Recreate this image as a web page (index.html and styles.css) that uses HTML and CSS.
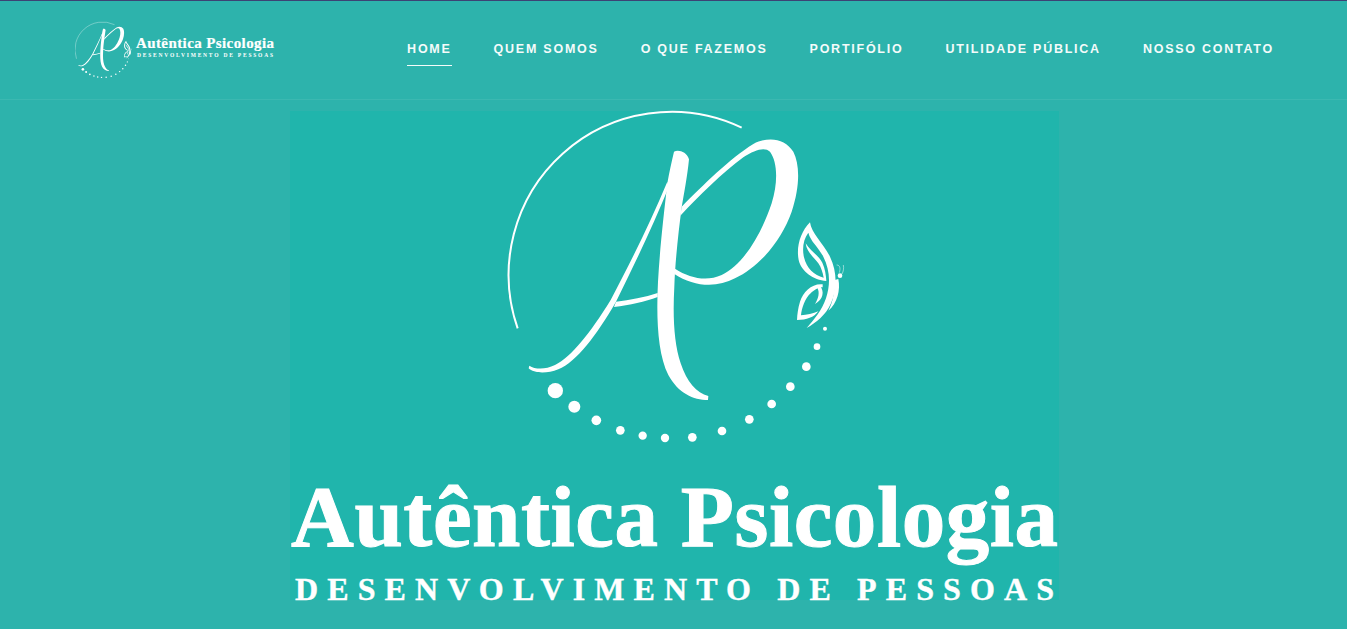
FILE: index.html
```html
<!DOCTYPE html>
<html>
<head>
    <title>Autêntica Psicologia</title>
    <link rel="stylesheet" href="styles.css">
</head>
<body>
    <svg class="defs" width="0" height="0">
        <defs>
            <!-- AP mark, drawn in a 1110x1050 box -->
            <g id="mark">
                <path class="arc" d="M755 83 A489 489 0 0 0 83 685"/>
                <!-- A: thin stroke -->
                <path d="M118 797 C135 808 165 810 195 795 C245 770 300 700 362 600 C420 490 480 370 532 245 L536 262 C490 375 435 490 378 605 C320 705 260 785 205 808 C170 822 130 820 116 805 Z"/>
                <!-- A: crossbar -->
                <path d="M378 605 C420 600 465 592 503 579 L503 591 C465 605 420 615 372 621 Z"/>
                <!-- A: stem -->
                <path d="M552 155 C565 148 590 155 597 178 C592 230 582 280 575 322 C565 400 555 490 553 560 C548 650 552 730 572 790 C590 845 620 880 655 888 L654 900 C610 900 565 880 535 825 C510 775 502 700 502 620 C502 520 515 400 532 250 C538 215 545 185 552 155 Z"/>
                <!-- P: bowl -->
                <path d="M575 320 C640 255 720 175 790 132 C835 108 885 115 910 155 C930 195 930 260 905 335 C875 420 810 500 735 535 C680 565 610 560 553 522 L555 506 C600 535 650 545 695 525 C760 495 815 400 845 310 C865 245 862 185 840 155 C825 140 795 148 760 172 C695 220 630 285 571 347 Z"/>
                <!-- butterfly -->
                <path d="M960 367 C964 400 1000 430 1020 470 C1042 515 1042 570 1022 612 C1007 645 978 668 950 684 C972 660 996 630 1008 595 C1022 552 1020 510 1000 470 C986 442 962 425 955 398 C940 418 936 445 942 472 C950 505 972 526 1001 533 C998 518 994 503 985 490 C972 472 950 456 947 430 C960 452 985 465 997 488 C1005 505 1008 525 1009 543 C970 540 934 515 926 480 C918 440 932 395 960 367 Z"/>
                <path d="M998 553 C965 550 940 575 930 605 C924 625 922 642 921 660 C950 660 972 652 985 634 C970 640 950 645 933 646 C935 625 945 595 962 580 C972 570 985 562 998 562 Z"/>
                <path d="M990 557 C1004 575 1000 597 975 612 C985 595 990 578 982 563 Z"/>
                <path d="M1045 537 C1052 570 1042 610 1015 632 C1030 605 1034 570 1034 540 Z"/>
                <circle cx="1050" cy="527" r="7"/>
                <path class="feeler" d="M1040 495 C1050 495 1052 505 1048 518 M1060 495 C1062 505 1060 515 1056 522"/>
                <!-- dots -->
                <circle cx="196" cy="872" r="23"/>
                <circle cx="253" cy="920" r="18"/>
                <circle cx="319" cy="961" r="14.5"/>
                <circle cx="391" cy="991" r="13"/>
                <circle cx="458" cy="1007" r="12.5"/>
                <circle cx="525" cy="1014" r="12.5"/>
                <circle cx="607" cy="1012" r="13"/>
                <circle cx="696" cy="993" r="13"/>
                <circle cx="778" cy="958" r="13"/>
                <circle cx="845" cy="912" r="13"/>
                <circle cx="901" cy="860" r="13"/>
                <circle cx="949" cy="800" r="13"/>
                <circle cx="981" cy="740" r="10"/>
                <circle cx="1005" cy="686" r="6"/>
            </g>
        </defs>
    </svg>

    <header class="site-header">
        <a class="brand" href="#">
            <svg class="brand-logo" viewBox="0 0 200 60" width="200" height="60">
                <use href="#mark" transform="translate(-3.2 0) scale(0.0566)"/>
                <text class="brand-name" x="61" y="27.5" textLength="138">Autêntica Psicologia</text>
                <text class="brand-sub" x="62" y="37" textLength="136">DESENVOLVIMENTO DE PESSOAS</text>
            </svg>
        </a>
        <nav class="main-nav">
            <a class="active" href="#">HOME</a>
            <a href="#">QUEM SOMOS</a>
            <a href="#">O QUE FAZEMOS</a>
            <a href="#">PORTIFÓLIO</a>
            <a href="#">UTILIDADE PÚBLICA</a>
            <a href="#">NOSSO CONTATO</a>
        </nav>
    </header>

    <main class="hero">
        <svg class="hero-logo" viewBox="0 0 769 489" width="769" height="489">
            <use href="#mark" transform="translate(200 -11) scale(0.33333)"/>
            <text class="hero-name" x="1" y="435" textLength="767">Autêntica Psicologia</text>
            <text class="hero-sub" x="5" y="488.5" textLength="759">DESENVOLVIMENTO DE PESSOAS</text>
        </svg>
    </main>
</body>
</html>
```

FILE: styles.css
```css
body {
    margin: 0;
    height: 629px;
    overflow: hidden;
    background: #2db3ac;
    font-family: "Liberation Sans", Arial, sans-serif;
}
.defs {
    position: absolute;
}
.site-header {
    display: flex;
    justify-content: space-between;
    align-items: center;
    height: 98px;
    padding: 0 52px 0 75px;
    border-top: 1px solid #3c4274;
    border-bottom: 1px solid #3bb8b1;
}
.brand {
    display: block;
    height: 60px;
}
.brand-logo {
    display: block;
    fill: white;
}
.brand-name {
    font-family: "Liberation Serif", serif;
    font-weight: bold;
    font-size: 15px;
    stroke: white;
    stroke-width: 0.2;
}
.brand-sub {
    font-family: "Liberation Serif", serif;
    font-weight: bold;
    font-size: 5.5px;
}
.main-nav {
    display: flex;
    margin-bottom: 1px;
}
.main-nav a {
    margin: 0 21px;
    padding: 7px 0 8px;
    border-bottom: 1px solid transparent;
    color: white;
    font-size: 12.5px;
    font-weight: bold;
    letter-spacing: 1.75px;
    line-height: 16px;
    text-decoration: none;
    opacity: 0.95;
}
.main-nav a.active {
    border-bottom-color: white;
}
.hero {
    display: flex;
    justify-content: center;
    padding: 11px 0 0 2px;
}
.hero-logo {
    display: block;
    overflow: visible;
    background: #20b5ac;
    fill: white;
}
.hero-name {
    font-family: "Liberation Serif", serif;
    font-weight: bold;
    font-size: 87px;
    stroke: white;
    stroke-width: 1;
}
.hero-sub {
    font-family: "Liberation Serif", serif;
    font-weight: bold;
    font-size: 32px;
    stroke: white;
    stroke-width: 0.4;
}
.arc {
    fill: none;
    stroke: white;
    stroke-width: 6;
}
.feeler {
    fill: none;
    stroke: white;
    stroke-width: 1.5;
}
```
